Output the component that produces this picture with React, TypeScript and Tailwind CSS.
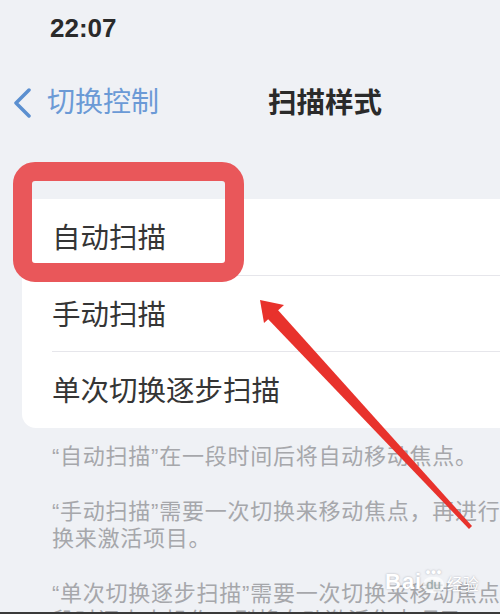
export default function App() {
  const rows = ['自动扫描', '手动扫描', '单次切换逐步扫描'];

  return (
    <div className="relative w-[500px] h-[614px] overflow-hidden bg-[#eff1f5] border-b-2 border-[#3a3a3a] font-['Liberation_Sans','Noto_Sans_CJK_SC',sans-serif]">
      {/* status bar */}
      <div className="h-[56px] pl-[50px] pt-[12px]">
        <span className="text-[26px] leading-[32px] font-bold text-[#2a2a2a]">22:07</span>
      </div>

      {/* nav bar */}
      <div className="h-[94px] flex items-center">
        <div className="flex items-center pl-[12px] w-[268px]">
          <svg width="20" height="30" viewBox="0 0 20 30" className="shrink-0">
            <polyline points="17,2 4,15 17,28" fill="none" stroke="#5b8fd0" strokeWidth="3.5" strokeLinecap="round" strokeLinejoin="round" />
          </svg>
          <span className="ml-[15px] text-[28px] leading-none text-[#6b9ad6]">切换控制</span>
        </div>
        <span className="text-[28.5px] leading-none font-bold text-[#2a2a2a]">扫描样式</span>
      </div>

      {/* list card */}
      <div className="mt-[49px] ml-[22px] w-[600px] rounded-[14px] bg-white">
        {rows.map((r, i) => (
          <div key={r} className="pl-[30px]">
            <div className={`${i === 0 ? 'h-[77px]' : 'h-[76px]'} flex items-center ${i < rows.length - 1 ? 'border-b border-[#e6e6eb]' : ''}`}>
              <span className="text-[28.5px] leading-none text-[#353535] pt-[3px]">{r}</span>
            </div>
          </div>
        ))}
      </div>

      {/* footnotes */}
      <div className="pl-[52px] text-[22px] leading-[27px] tracking-[0.75px] text-[#a6a7ab] whitespace-nowrap">
        <p className="mt-[15px]">“自动扫描”在一段时间后将自动移动焦点。</p>
        <p className="mt-[28px]">
          “手动扫描”需要一次切换来移动焦点，再进行一次切
          <br />
          换来激活项目。
        </p>
        <p className="mt-[28px]">
          “单次切换逐步扫描”需要一次切换来移动焦点，如果一
          <br />
          段时间内未操作，则将自动激活焦点项目。
        </p>
      </div>

      {/* red highlight box */}
      <div className="absolute left-[13px] top-[162px] w-[231px] h-[120px] rounded-[22px] border-[19px] border-[#e9575a]" />

      {/* red arrow */}
      <svg className="absolute left-0 top-0" width="500" height="614" viewBox="0 0 500 614">
        <polygon points="267,318 277,309 472,526 469,529" fill="#e8322c" />
        <polygon points="260,300 264,323 284,305" fill="#e8322c" />
      </svg>

      {/* watermark */}
      <div className="absolute left-[385px] top-[568px] flex items-end text-white [text-shadow:0_0_2px_rgba(120,120,130,0.6)]">
        <span className="text-[22px] leading-none font-bold tracking-[1px]">Bai</span>
        <span className="relative mx-[1px] flex flex-col items-center">
          <span className="text-[9px] leading-none">●●●</span>
          <span className="rounded-full bg-white/70 px-[3px] text-[13px] leading-[16px] text-[#9aa]">du</span>
        </span>
        <span className="text-[16px] leading-none ml-[2px]">经验</span>
      </div>
    </div>
  );
}
